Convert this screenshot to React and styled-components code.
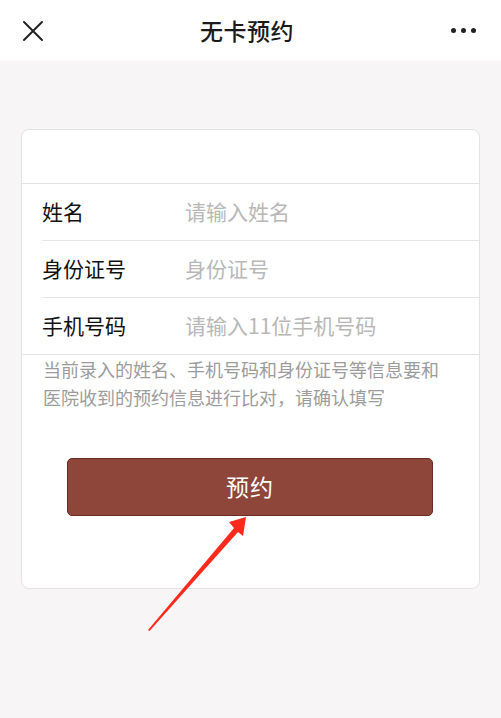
import React from "react";
import styled, { createGlobalStyle } from "styled-components";

const GlobalStyle = createGlobalStyle`
  html, body {
    margin: 0;
    padding: 0;
    background: #f7f5f5;
    font-family: "Noto Sans CJK SC", "Noto Sans", sans-serif;
  }
`;

const fields = [
  { id: 0, label: "姓名", placeholder: "请输入姓名" },
  { id: 1, label: "身份证号", placeholder: "身份证号" },
  { id: 2, label: "手机号码", placeholder: "请输入11位手机号码" },
];

const App = () => {
  return (
    <Page>
      <GlobalStyle />
      <NavBar>
        <IconButton aria-label="close">
          <svg width="22" height="22" viewBox="0 0 22 22">
            <path d="M2 2 L20 20 M20 2 L2 20" stroke="#222" strokeWidth="2" strokeLinecap="round" />
          </svg>
        </IconButton>
        <Title>无卡预约</Title>
        <MoreButton aria-label="more">
          <Dot />
          <Dot />
          <Dot />
        </MoreButton>
      </NavBar>

      <Content>
        <Card>
          <CardTop />
          <Fields>
            {fields.map((f, i) => (
              <Row key={f.id} last={i === fields.length - 1}>
                <Label>{f.label}</Label>
                <Input placeholder={f.placeholder} />
              </Row>
            ))}
          </Fields>
          <Note>
            当前录入的姓名、手机号码和身份证号等信息要和医院收到的预约信息进行比对，请确认填写
          </Note>
          <SubmitButton>预约</SubmitButton>
        </Card>
      </Content>

      {/* red annotation arrow pointing at the button */}
      <Arrow width="120" height="130" viewBox="0 0 120 130">
        <path d="M8 120 L94 18 L89 12 L106 7 L103 26 L98 22 L9.5 121 Z" fill="#fe2a1c" />
      </Arrow>
    </Page>
  );
};

export default App;

const Page = styled.div`
  position: relative;
  width: 501px;
  min-height: 718px;
`;

const NavBar = styled.div`
  height: 61px;
  background: #fff;
  display: grid;
  grid-template-columns: 1fr auto 1fr;
  align-items: center;
  padding: 0 22px;
  box-sizing: border-box;
`;

const IconButton = styled.div`
  justify-self: start;
  display: flex;
  align-items: center;
  margin-top: 1px;
`;

const Title = styled.div`
  font-size: 23px;
  color: #1a1a1a;
  font-weight: 500;
  letter-spacing: 0.5px;
  margin-right: 7px;
  margin-bottom: 2px;
`;

const MoreButton = styled.div`
  justify-self: end;
  display: flex;
  gap: 5px;
  margin-right: 3px;
  margin-bottom: 1px;
`;

const Dot = styled.span`
  width: 5px;
  height: 5px;
  border-radius: 50%;
  background: #222;
`;

const Content = styled.div`
  padding: 68px 21px 0;
`;

const Card = styled.div`
  background: #fff;
  border: 1px solid #e3e3e3;
  border-radius: 8px;
  height: 460px;
  box-sizing: border-box;
  display: flex;
  flex-direction: column;
`;

const CardTop = styled.div`
  height: 53px;
  border-bottom: 1px solid #e3e3e3;
`;

const Fields = styled.div`
  border-bottom: 1px solid #e3e3e3;
  padding-left: 20px;
`;

const Row = styled.div`
  height: 53px;
  padding-bottom: 3px;
  display: flex;
  align-items: center;
  border-bottom: ${(p) => (p.last ? "none" : "1px solid #e6e6e6")};
`;

const Label = styled.div`
  width: 143px;
  font-size: 21px;
  color: #111;
`;

const Input = styled.input`
  flex: 1;
  min-width: 0;
  border: none;
  outline: none;
  background: transparent;
  font-family: inherit;
  font-size: 21px;
  color: #111;
  padding: 0;
  &::placeholder {
    color: #b8b8b8;
  }
`;

const Note = styled.div`
  padding: 0 30px 0 21px;
  font-size: 18px;
  line-height: 28px;
  color: #9c9c9c;
`;

const SubmitButton = styled.button`
  margin: 47px 46px 0 45px;
  height: 58px;
  background: #8e463b;
  border: 1px solid #6a2b22;
  border-radius: 5px;
  color: #fff;
  font-family: inherit;
  font-size: 23px;
  letter-spacing: 1px;
  padding-bottom: 3px;
`;

const Arrow = styled.svg`
  position: absolute;
  left: 140px;
  top: 510px;
`;
